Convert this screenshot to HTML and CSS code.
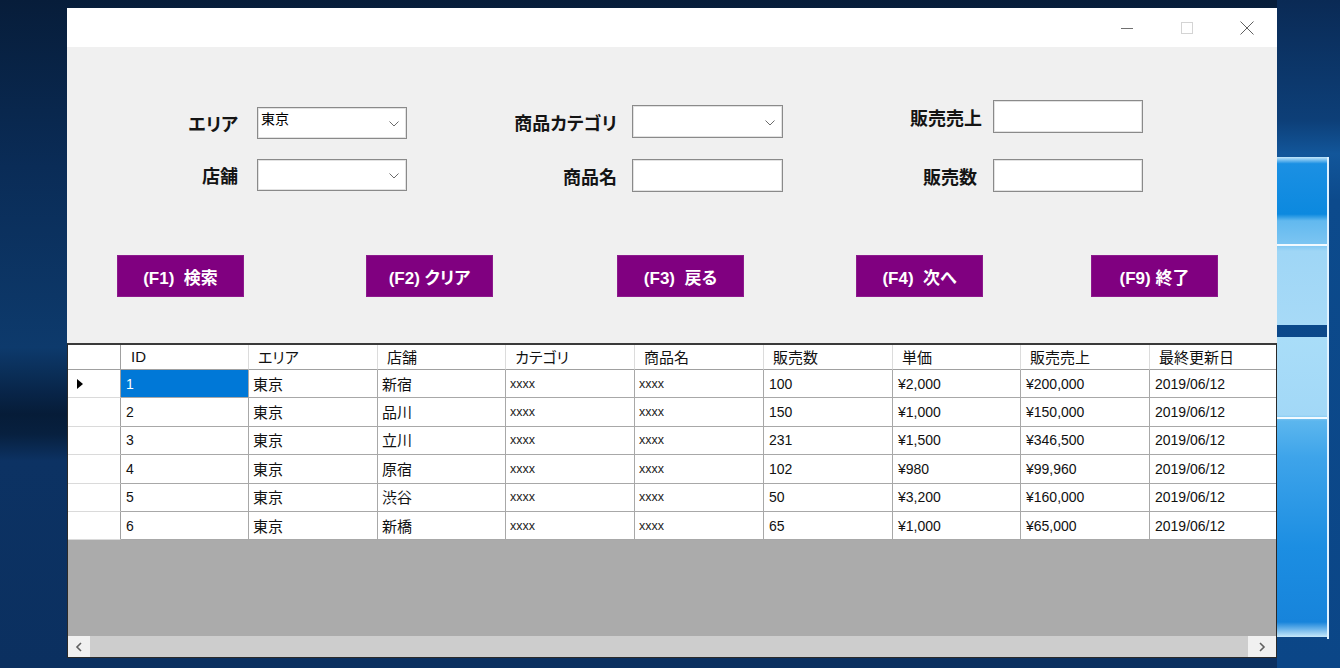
FILE: index.html
```html
<!DOCTYPE html>
<html lang="ja">
<head>
<meta charset="utf-8">
<title>販売検索</title>
<link rel="stylesheet" href="styles.css">
</head>
<body>
<div class="window">
  <div class="titlebar">
    <span class="tb-btn"><svg width="12" height="12" viewBox="0 0 12 12"><path d="M0 6.5H12" stroke="#707070" stroke-width="1"/></svg></span>
    <span class="tb-btn"><svg width="12" height="12" viewBox="0 0 12 12"><rect x="0.5" y="0.5" width="11" height="11" fill="none" stroke="#d4d4d4" stroke-width="1"/></svg></span>
    <span class="tb-btn"><svg width="14" height="14" viewBox="0 0 14 14"><path d="M0.5 0.5L13.5 13.5M13.5 0.5L0.5 13.5" stroke="#606060" stroke-width="1"/></svg></span>
  </div>
  <div class="panel">
    <div class="fields">
      <div class="group g1">
        <span class="lbl">エリア</span>
        <div class="combo"><span class="combo-text">東京</span><svg class="chev" width="10" height="6" viewBox="0 0 10 6"><path d="M0.5 0.5L5 5L9.5 0.5" fill="none" stroke="#6b6b6b" stroke-width="1"/></svg></div>
        <span class="lbl">店舗</span>
        <div class="combo"><span class="combo-text"></span><svg class="chev" width="10" height="6" viewBox="0 0 10 6"><path d="M0.5 0.5L5 5L9.5 0.5" fill="none" stroke="#6b6b6b" stroke-width="1"/></svg></div>
      </div>
      <div class="group g2">
        <span class="lbl">商品カテゴリ</span>
        <div class="combo"><span class="combo-text"></span><svg class="chev" width="10" height="6" viewBox="0 0 10 6"><path d="M0.5 0.5L5 5L9.5 0.5" fill="none" stroke="#6b6b6b" stroke-width="1"/></svg></div>
        <span class="lbl">商品名</span>
        <div class="textbox"></div>
      </div>
      <div class="group g3">
        <span class="lbl">販売売上</span>
        <div class="textbox"></div>
        <span class="lbl lbl-in">販売数</span>
        <div class="textbox"></div>
      </div>
    </div>
    <div class="buttons">
      <button class="fbtn b1">(F1)  検索</button>
      <button class="fbtn b2">(F2) クリア</button>
      <button class="fbtn b3">(F3)  戻る</button>
      <button class="fbtn b4">(F4)  次へ</button>
      <button class="fbtn b5">(F9) 終了</button>
    </div>
  </div>
  <div class="grid">
    <div class="grid-body">
      <table class="dgv">
        <colgroup>
          <col class="c-rh"><col class="c128"><col class="c129"><col class="c128"><col class="c129"><col class="c129"><col class="c129"><col class="c128"><col class="c129"><col class="c129">
        </colgroup>
        <thead>
          <tr class="hrow">
            <th class="rh"></th>
            <th class="l">ID</th>
            <th>エリア</th>
            <th>店舗</th>
            <th>カテゴリ</th>
            <th>商品名</th>
            <th>販売数</th>
            <th>単価</th>
            <th>販売売上</th>
            <th>最終更新日</th>
          </tr>
        </thead>
        <tbody>
          <tr>
            <td class="rh"><span class="cur"></span></td>
            <td class="l sel">1</td><td>東京</td><td>新宿</td><td class="x">xxxx</td><td class="x">xxxx</td><td class="l">100</td><td class="l">¥2,000</td><td class="l">¥200,000</td><td class="l">2019/06/12</td>
          </tr>
          <tr>
            <td class="rh"></td>
            <td class="l">2</td><td>東京</td><td>品川</td><td class="x">xxxx</td><td class="x">xxxx</td><td class="l">150</td><td class="l">¥1,000</td><td class="l">¥150,000</td><td class="l">2019/06/12</td>
          </tr>
          <tr>
            <td class="rh"></td>
            <td class="l">3</td><td>東京</td><td>立川</td><td class="x">xxxx</td><td class="x">xxxx</td><td class="l">231</td><td class="l">¥1,500</td><td class="l">¥346,500</td><td class="l">2019/06/12</td>
          </tr>
          <tr>
            <td class="rh"></td>
            <td class="l">4</td><td>東京</td><td>原宿</td><td class="x">xxxx</td><td class="x">xxxx</td><td class="l">102</td><td class="l">¥980</td><td class="l">¥99,960</td><td class="l">2019/06/12</td>
          </tr>
          <tr>
            <td class="rh"></td>
            <td class="l">5</td><td>東京</td><td>渋谷</td><td class="x">xxxx</td><td class="x">xxxx</td><td class="l">50</td><td class="l">¥3,200</td><td class="l">¥160,000</td><td class="l">2019/06/12</td>
          </tr>
          <tr>
            <td class="rh"></td>
            <td class="l">6</td><td>東京</td><td>新橋</td><td class="x">xxxx</td><td class="x">xxxx</td><td class="l">65</td><td class="l">¥1,000</td><td class="l">¥65,000</td><td class="l">2019/06/12</td>
          </tr>
        </tbody>
      </table>
    </div>
    <div class="hscroll">
      <span class="sb-btn sb-left"><svg width="8" height="10" viewBox="0 0 8 10"><path d="M6 1L2 5L6 9" fill="none" stroke="#606060" stroke-width="1.6"/></svg></span>
      <span class="sb-thumb"></span>
      <span class="sb-btn sb-right"><svg width="8" height="10" viewBox="0 0 8 10"><path d="M2 1L6 5L2 9" fill="none" stroke="#606060" stroke-width="1.6"/></svg></span>
    </div>
  </div>
</div>
</body>
</html>
```

FILE: styles.css
```css
* { box-sizing: border-box; }
html, body { margin: 0; padding: 0; }

body {
  width: 1340px;
  height: 668px;
  overflow: hidden;
  font-family: "Noto Sans CJK JP", sans-serif;
  color: #111;
  background:
    linear-gradient(#dff2ff, #dff2ff) 1327px 157px / 2px 482px no-repeat,
    linear-gradient(#f2faff, #f2faff) 1277px 417px / 51px 2px no-repeat,
    linear-gradient(#f2faff, #f2faff) 1277px 244px / 51px 2px no-repeat,
    linear-gradient(to bottom, #a9ddf8 0%, #a2d8f7 26%, #5cb6ee 28%, #3ea4ea 40%, #1c8ee2 70%, #1784db 95%, #c6e8fb 100%) 1277px 337px / 51px 300px no-repeat,
    linear-gradient(to bottom, #c4e7fb 0%, #1b90e3 4%, #0c89df 34%, #62b9ef 38%, #7cc5f2 52%, #9fd6f6 56%, #a7daf7 100%) 1277px 157px / 51px 168px no-repeat,
    linear-gradient(to bottom, #0a2a55 0%, #0d3f78 18%, #12569a 23%, #0c4a8c 30%, #0b4687 100%) 1277px 0 / 63px 668px no-repeat,
    linear-gradient(to bottom, #071d3a 0%, #0a2c57 25%, #0d3a6c 52%, #082447 59%, #061c38 62%, #07203f 65%, #0c3263 69%, #0b3060 100%) 0 0 / 1277px 668px no-repeat;
}

.window {
  margin: 8px 0 0 67px;
  width: 1210px;
  height: 650px;
  display: flex;
  flex-direction: column;
}

.titlebar {
  height: 39px;
  background: #fff;
  display: flex;
  justify-content: flex-end;
}
.tb-btn {
  width: 60px;
  height: 39px;
  display: flex;
  align-items: center;
  justify-content: center;
}

.panel {
  height: 296px;
  background: #f0f0f0;
}

.fields {
  display: flex;
  align-items: flex-start;
  height: 145px;
}
.group {
  display: grid;
  align-items: center;
}
.g1 {
  margin-left: 113px;
  padding-top: 60px;
  grid-template-columns: 60px 150px;
  grid-auto-rows: 32px;
  column-gap: 17px;
  row-gap: 20px;
}
.g2 {
  margin-left: 100px;
  padding-top: 58px;
  grid-template-columns: 110px 151px;
  grid-auto-rows: 33px;
  column-gap: 15px;
  row-gap: 21px;
}
.g3 {
  margin-left: 109px;
  padding-top: 53px;
  grid-template-columns: 90px 150px;
  grid-auto-rows: 33px;
  column-gap: 11px;
  row-gap: 26px;
}
.lbl {
  justify-self: end;
  font-weight: 700;
  font-size: 18px;
  line-height: 1;
  font-feature-settings: "palt";
  color: #141414;
  white-space: nowrap;
}
.g1 .lbl { margin-right: 2px; }
.lbl-in { margin-right: 5px; }

.combo, .textbox {
  height: 100%;
  background: #fff;
  border: 1px solid #8a8a8a;
  box-shadow: inset 0 0 0 1px #e2e2e2;
}
.combo {
  display: flex;
  justify-content: space-between;
  align-items: flex-start;
  padding: 2px 7px 0 3px;
}
.combo-text {
  font-size: 14px;
  line-height: 16px;
  color: #000;
}
.chev { align-self: center; }

.buttons {
  display: flex;
  margin-top: 63px;
}
.fbtn {
  width: 127px;
  height: 42px;
  padding: 0;
  border: 1px solid #8c1a8c;
  background: #800080;
  color: #fff;
  font-family: "Liberation Sans", "Noto Sans CJK JP", sans-serif;
  font-weight: 700;
  font-size: 17px;
  white-space: pre;
  font-feature-settings: "palt";
}
.b1 { margin-left: 50px; }
.b2 { margin-left: 122px; }
.b3 { margin-left: 124px; }
.b4 { margin-left: 112px; }
.b5 { margin-left: 108px; }

.grid {
  height: 315px;
  border: 1px solid #2a2a2a;
  border-top: 2px solid #3a3a3a;
  display: flex;
  flex-direction: column;
  overflow: hidden;
}
.grid-body {
  flex: 1;
  background: #ababab;
  overflow: hidden;
}

.dgv {
  border-collapse: separate;
  border-spacing: 0;
  table-layout: fixed;
  width: 1210px;
  background: #fff;
  font-feature-settings: "palt";
}
.c-rh { width: 53px; }
.c128 { width: 128px; }
.c129 { width: 129px; }

.dgv th, .dgv td {
  padding: 0 0 0 4px;
  text-align: left;
  vertical-align: middle;
  white-space: nowrap;
  overflow: hidden;
  font-weight: 400;
  font-size: 15px;
  line-height: 18px;
  color: #111;
  border-right: 1px solid #a8a8a8;
  border-bottom: 1px solid #a8a8a8;
}
.hrow { height: 25px; }
.dgv th {
  padding-left: 9px;
  border-right-color: #dcdcdc;
  border-bottom-color: #a0a0a0;
}
.dgv tbody tr { height: 28.4px; }
.dgv .rh {
  padding: 0 0 0 9px;
  border-right-color: #a0a0a0;
  border-bottom-color: #dadada;
}
.dgv th.rh { border-bottom-color: #a0a0a0; }
.dgv .l {
  font-family: "Liberation Sans", sans-serif;
  font-size: 14px;
  padding-left: 5px;
}
.dgv th.l { font-size: 15px; padding-left: 10px; }
.dgv .x {
  font-family: "Liberation Sans", sans-serif;
  font-size: 12.5px;
  color: #222;
}
.dgv .sel {
  background: #0078d7;
  color: #fff;
}
.cur {
  display: block;
  width: 0;
  height: 0;
  border-top: 5px solid transparent;
  border-bottom: 5px solid transparent;
  border-left: 6px solid #000;
}

.hscroll {
  height: 21px;
  display: flex;
  background: #f0f0f0;
}
.sb-btn {
  display: flex;
  align-items: center;
  justify-content: center;
  background: #f0f0f0;
}
.sb-left { width: 22px; }
.sb-right { width: 28px; }
.sb-thumb {
  flex: 1;
  background: #cdcdcd;
}
```
